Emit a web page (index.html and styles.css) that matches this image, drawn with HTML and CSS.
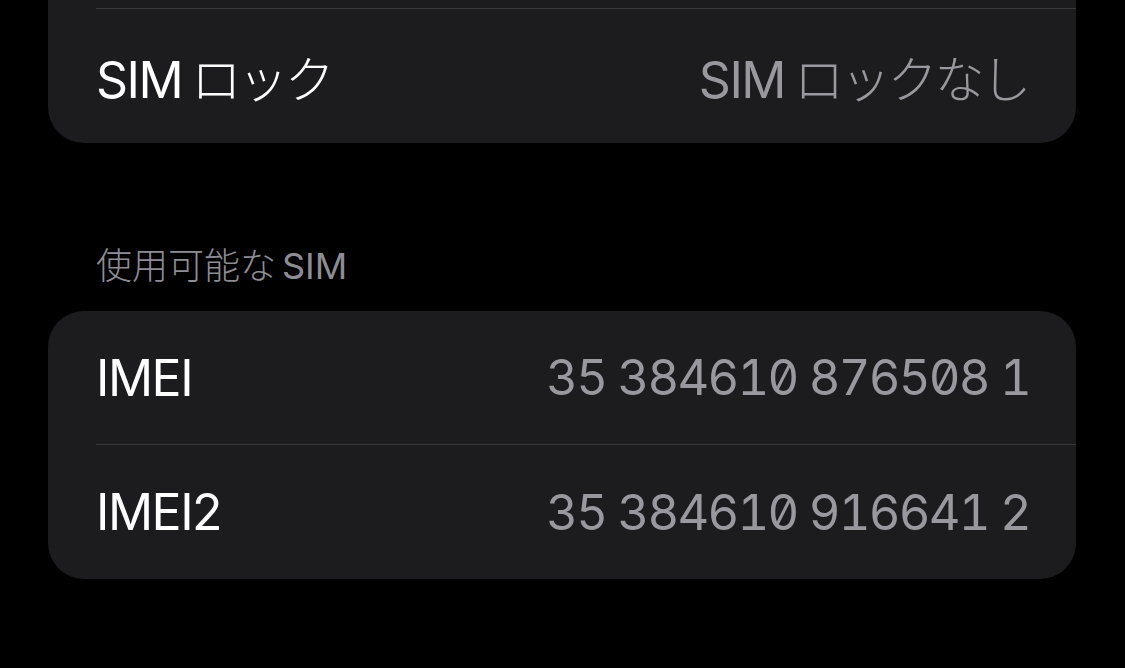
FILE: index.html
```html
<!DOCTYPE html>
<html lang="ja">
<head>
  <meta charset="UTF-8" />
  <title>SIM情報</title>
  <link rel="stylesheet" href="styles.css">
</head>
<body>

  <!-- upper group, its top is scrolled out of view -->
  <div class="card card-cut">
    <div class="row">
      <span class="label">SIM<span class="kana">ロック</span></span>
      <span class="value">SIM<span class="kana">ロックなし</span></span>
    </div>
  </div>

  <div class="section-title">使用可能な<span class="latin">SIM</span></div>

  <div class="card">
    <div class="row first">
      <span class="label">IMEI</span>
      <span class="value num">35 384610 876508 1</span>
    </div>
    <div class="row">
      <span class="label">IMEI2</span>
      <span class="value num">35 384610 916641 2</span>
    </div>
  </div>

</body>
</html>
```

FILE: styles.css
```css
html, body {
  margin: 0;
  padding: 0;
}

body {
  background-color: #000;
  color: #fff;
  font-family: Inter, "Noto Sans CJK JP", sans-serif;
  padding: 0 49px 0 48px;
  overflow: hidden;
}

.card {
  background-color: #1c1c1e;
  border-radius: 36px;
}

.card-cut {
  border-radius: 0 0 36px 36px;
  padding-top: 8px;
}

.row {
  display: flex;
  justify-content: space-between;
  align-items: center;
  height: 134px;
  margin-left: 48px;
  padding-right: 48px;
  border-top: 1px solid #38383a;
}

.row.first {
  border-top: none;
  height: 133px;
}

.label {
  font-size: 50px;
  letter-spacing: -1.5px;
  color: #fff;
  white-space: nowrap;
}

.value {
  font-size: 50px;
  letter-spacing: -1.5px;
  color: #98989e;
  white-space: nowrap;
}

.kana {
  margin-left: 9px;
  letter-spacing: -3.2px;
  font-weight: 300;
}

.num {
  font-size: 49px;
  letter-spacing: -1.8px;
  margin-right: -2px;
  font-feature-settings: "tnum" 1, "zero" 1;
}

.section-title {
  font-size: 36px;
  font-weight: 300;
  color: #8d8d93;
  margin: 100px 0 22px 48px;
  line-height: 46px;
}

.section-title .latin {
  margin-left: 6px;
  font-weight: 400;
}
```
